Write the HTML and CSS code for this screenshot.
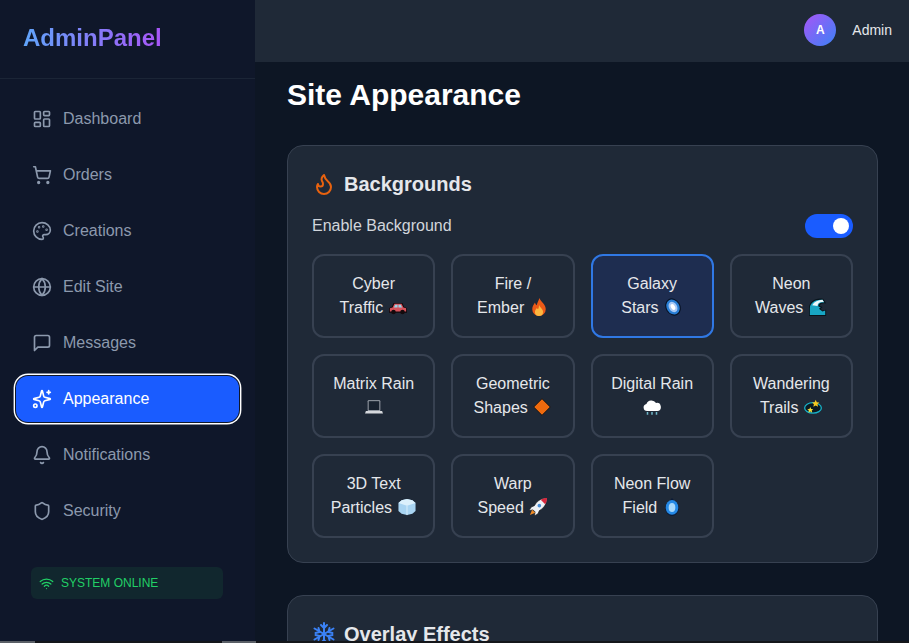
FILE: index.html
```html
<!DOCTYPE html>
<html lang="en">
<head>
<meta charset="utf-8">
<title>Site Appearance</title>
<link rel="stylesheet" href="styles.css">
</head>
<body>
<aside class="sidebar">
  <div class="brand"><span class="brand-text">AdminPanel</span></div>
  <nav class="nav">
    <a class="nav-item"><svg class="ico" viewBox="0 0 24 24"><rect x="3" y="3" width="7" height="9" rx="1"/><rect x="14" y="3" width="7" height="5" rx="1"/><rect x="14" y="12" width="7" height="9" rx="1"/><rect x="3" y="16" width="7" height="5" rx="1"/></svg>Dashboard</a>
    <a class="nav-item"><svg class="ico" viewBox="0 0 24 24"><circle cx="8" cy="21" r="1"/><circle cx="19" cy="21" r="1"/><path d="M2.05 2.05h2l2.66 12.42a2 2 0 0 0 2 1.58h9.78a2 2 0 0 0 1.95-1.57l1.65-7.43H5.12"/></svg>Orders</a>
    <a class="nav-item"><svg class="ico" viewBox="0 0 24 24"><circle cx="13.5" cy="6.5" r=".5"/><circle cx="17.5" cy="10.5" r=".5"/><circle cx="8.5" cy="7.5" r=".5"/><circle cx="6.5" cy="12.5" r=".5"/><path d="M12 2C6.5 2 2 6.5 2 12s4.5 10 10 10c.926 0 1.648-.746 1.648-1.688 0-.437-.18-.835-.437-1.125-.29-.289-.438-.652-.438-1.125a1.64 1.64 0 0 1 1.668-1.668h1.996c3.051 0 5.555-2.503 5.555-5.554C21.965 6.012 17.461 2 12 2z"/></svg>Creations</a>
    <a class="nav-item"><svg class="ico" viewBox="0 0 24 24"><circle cx="12" cy="12" r="10"/><path d="M12 2a14.5 14.5 0 0 0 0 20 14.5 14.5 0 0 0 0-20"/><path d="M2 12h20"/></svg>Edit Site</a>
    <a class="nav-item"><svg class="ico" viewBox="0 0 24 24"><path d="M21 15a2 2 0 0 1-2 2H7l-4 4V5a2 2 0 0 1 2-2h14a2 2 0 0 1 2 2z"/></svg>Messages</a>
    <a class="nav-item active"><svg class="ico" viewBox="0 0 24 24"><path d="M9.937 15.5A2 2 0 0 0 8.5 14.063l-6.135-1.582a.5.5 0 0 1 0-.962L8.5 9.936A2 2 0 0 0 9.937 8.5l1.582-6.135a.5.5 0 0 1 .963 0L14.063 8.5A2 2 0 0 0 15.5 9.937l6.135 1.581a.5.5 0 0 1 0 .964L15.5 14.063a2 2 0 0 0-1.437 1.437l-1.582 6.135a.5.5 0 0 1-.963 0z"/><path d="M20 2v4"/><path d="M22 4h-4"/><circle cx="4" cy="20" r="2"/></svg>Appearance</a>
    <a class="nav-item"><svg class="ico" viewBox="0 0 24 24"><path d="M10.268 21a2 2 0 0 0 3.464 0"/><path d="M3.262 15.326A1 1 0 0 0 4 17h16a1 1 0 0 0 .74-1.673C19.41 13.956 18 12.499 18 8A6 6 0 0 0 6 8c0 4.499-1.411 5.956-2.738 7.326"/></svg>Notifications</a>
    <a class="nav-item"><svg class="ico" viewBox="0 0 24 24"><path d="M20 13c0 5-3.500 7.500-7.660 8.950a1 1 0 0 1-.670-.010C7.500 20.500 4 18 4 13V6a1 1 0 0 1 1-1c2 0 4.500-1.200 6.240-2.720a1.170 1.170 0 0 1 1.520 0C14.510 3.810 17 5 19 5a1 1 0 0 1 1 1z"/></svg>Security</a>
  </nav>
  <div class="status"><svg class="ico-sm" viewBox="0 0 24 24"><path d="M12 20h.01"/><path d="M2 8.820a15 15 0 0 1 20 0"/><path d="M5 12.859a10 10 0 0 1 14 0"/><path d="M8.500 16.429a5 5 0 0 1 7 0"/></svg>SYSTEM ONLINE</div>
</aside>
<div class="column">
  <header class="topbar">
    <div class="avatar">A</div>
    <span class="user">Admin</span>
  </header>
  <main class="content">
    <h1 class="page-title">Site Appearance</h1>
    <section class="card">
      <h2 class="card-title"><svg class="ico-lg flame" viewBox="0 0 24 24"><path d="M8.500 14.500A2.500 2.500 0 0 0 11 12c0-1.380-.5-2-1-3-1.072-2.143-.224-4.054 2-6 .5 2.500 2 4.900 4 6.500 2 1.600 3 3.500 3 5.500a7 7 0 1 1-14 0c0-1.153.433-2.294 1-3a2.500 2.500 0 0 0 2.500 2.500z"/></svg>Backgrounds</h2>
      <div class="toggle-row">
        <span>Enable Background</span>
        <span class="toggle"><span class="knob"></span></span>
      </div>
      <div class="grid">
        <button class="tile">Cyber Traffic <svg class="emoji" viewBox="0 0 20 20"><path d="M0 16.500v-5l3-1.500 2-4.500h10l2 4.500 3 1.500v5z" fill="#15090c"/><path d="M1 15v-3.500L4 10.500 6 6.500h8l2 4 3 1V15z" fill="#d8535c"/><path d="M6.800 7.500h2.700v3H5.500zM10.500 7.500h2.700l1.300 3h-4z" fill="#9ad4e8"/><circle cx="5" cy="15.500" r="2.500" fill="#15090c"/><circle cx="15" cy="15.500" r="2.500" fill="#15090c"/></svg></button>
        <button class="tile">Fire / Ember <svg class="emoji" viewBox="0 0 20 20"><path d="M10.500 0c1 4 7 6.500 7 12.500a7.500 7.500 0 0 1-15 0c0-3.500 1.800-5 3-7.500.5 1.500 1 2.500 2 3C8 5.500 9.500 3 10.500 0z" fill="#ec5a17"/><path d="M10 7.500c.5 2.500 4.500 4.500 4.500 8a4.500 4.500 0 0 1-9 0c0-2.500 1.300-3 2-4.500.5.7 1 1.300 1.500 1.300C9.800 11 10 9.500 10 7.500z" fill="#fcb73f"/></svg></button>
        <button class="tile selected">Galaxy Stars <svg class="emoji" viewBox="0 0 20 20"><ellipse cx="10" cy="10" rx="8.200" ry="10" transform="rotate(-30 10 10)" fill="#081225"/><ellipse cx="10" cy="10" rx="7" ry="8.800" transform="rotate(-30 10 10)" fill="#2a7fd6"/><ellipse cx="10" cy="10" rx="4.500" ry="6.200" transform="rotate(-30 10 10)" fill="#a9c9f5"/><ellipse cx="10" cy="10" rx="2.200" ry="3.500" transform="rotate(-30 10 10)" fill="#fff"/></svg></button>
        <button class="tile">Neon Waves <svg class="emoji" viewBox="0 0 20 20"><path d="M0 20V11C0 4 8-1 16 1l3 5c-5-1-7 1-7 3l3 1-2 2 2 2 4-1v7z" fill="#08141c"/><path d="M1 19v-8C1 5 8 1 15 2l2 3c-5-.5-7 1.500-6.500 4.500L13 10.500 11 12l4 3 3-1v5z" fill="#18a6c4"/><path d="M3.500 8C6 4 10 2.500 15 2l1.500 2.500C12 4 9.500 5.500 9.500 9z" fill="#edf9fc"/></svg></button>
        <button class="tile">Matrix Rain <svg class="emoji" viewBox="0 0 20 20"><rect x="3" y="2.500" width="14" height="12" rx="1" fill="#aab0b8"/><rect x="4" y="3.500" width="12" height="10" fill="#18222f"/><path d="M1 14.500h18l1 2.800H0z" fill="#d5d8dc"/></svg></button>
        <button class="tile">Geometric Shapes <svg class="emoji" viewBox="0 0 20 20"><path d="M10 .8 19.200 10 10 19.200 .8 10z" fill="#ef6a0e" stroke="#141414" stroke-width="1"/></svg></button>
        <button class="tile">Digital Rain <svg class="emoji" viewBox="0 0 20 20"><path d="M4.500 14.500A4 4 0 0 1 3.800 6.600 6 6 0 0 1 14.500 5.500 4.500 4.500 0 0 1 16 14.500z" fill="#fff"/><path d="M5 15.500v3M10 15.500v3M15 15.500v3" stroke="#6fb7c9" stroke-width="1.700"/></svg></button>
        <button class="tile">Wandering Trails <svg class="emoji" viewBox="0 0 20 20"><ellipse cx="10" cy="11" rx="9.300" ry="5.800" fill="#0b1a22" stroke="#17b3c9" stroke-width="1.400"/><path d="m13 2 1.200 2.800 2.800.3-2 1.900.6 2.800-2.600-1.400-2.600 1.400.6-2.800-2-1.900 2.800-.3z" fill="#f7c81e"/><path d="m7 10 1 2.200 2.300.2-1.700 1.600.5 2.300-2.100-1.200-2.100 1.200.5-2.300-1.700-1.600 2.300-.2z" fill="#f7e03a"/></svg></button>
        <button class="tile">3D Text Particles <svg class="emoji" viewBox="0 0 20 20"><path d="M4 2.500 10 1l6 1.500 3.500 3v9l-3.500 3L10 19l-6-1.500-3.500-3v-9z" fill="#a8d4f2"/><path d="M4 2.500 10 1l6 1.500 3.500 3L10 8.500.5 5.500z" fill="#dbf0fc"/><path d="M10 8.500V19" stroke="#dbf0fc" stroke-width="1"/></svg></button>
        <button class="tile">Warp Speed <svg class="emoji" viewBox="0 0 20 20"><path d="M20 0C14 0 9 3 6 8.500L2.500 10 0 14l4.500-.8L6.800 15.500 6 20l4-2.500 1.500-3.500C17 11 20 6 20 0z" fill="#eef1f5" stroke="#141414" stroke-width=".7"/><path d="M20 0c-2.500 0-4.500.6-7 2l5 5c1.400-2.500 2-4.500 2-7z" fill="#d6263c"/><circle cx="11.500" cy="8.500" r="2" fill="#4a8fd8"/><path d="m1 19 2.500-6 3.500 3.500z" fill="#f08a24"/></svg></button>
        <button class="tile">Neon Flow Field <svg class="emoji" viewBox="0 0 20 20"><path d="M10 0 17.500 8.500C18.500 14 15 20 10 20S1.500 14 2.500 8.500z" fill="#0a1b38"/><ellipse cx="10" cy="10.500" rx="7" ry="8.200" fill="#2589e6"/><ellipse cx="10" cy="10.500" rx="3.700" ry="5" fill="#a8d8fb"/></svg></button>
      </div>
    </section>
    <section class="card">
      <h2 class="card-title"><svg class="ico-lg snow" viewBox="0 0 24 24"><path d="M12 1v22"/><path d="M2.500 6.500l19 11"/><path d="M21.500 6.500l-19 11"/><path d="m9 3 3 3 3-3"/><path d="m9 21 3-3 3 3"/><path d="M3.500 11l4-1-1-4"/><path d="M20.500 11l-4-1 1-4"/><path d="M3.500 13l4 1-1 4"/><path d="M20.500 13l-4 1 1 4"/></svg>Overlay Effects</h2>
    </section>
  </main>
</div>
<div class="scroll-strip"><span class="strip-a"></span><span class="strip-b"></span></div>
</body>
</html>
```

FILE: styles.css
```css
* { box-sizing: border-box; }
html, body { height: 100%; margin: 0; }
body {
  display: flex;
  position: relative;
  overflow: hidden;
  background: #0d1624;
  font-family: "Liberation Sans", Arial, sans-serif;
  color: #e5e7eb;
}
.sidebar {
  width: 255px;
  flex: none;
  background: #0f172a;
  display: flex;
  flex-direction: column;
}
.brand {
  height: 79px;
  padding: 23px 23px 0;
  border-bottom: 1px solid #1b2536;
}
.brand-text {
  font-size: 24px;
  line-height: 29px;
  font-weight: 700;
  background: linear-gradient(90deg, #60a5fa, #a855f7);
  -webkit-background-clip: text;
  background-clip: text;
  color: transparent;
}
.nav {
  display: flex;
  flex-direction: column;
  gap: 10px;
  padding: 17px 16px 0;
}
.nav-item {
  height: 46px;
  width: 223px;
  display: flex;
  align-items: center;
  gap: 11px;
  padding-left: 16px;
  border-radius: 12px;
  font-size: 16px;
  color: #8c99ad;
}
.nav-item.active {
  background: #1a5cff;
  color: #fff;
  box-shadow: 0 0 0 1px #0f172a, 0 0 0 2.4px #fff;
}
.ico, .ico-sm, .ico-lg {
  flex: none;
  fill: none;
  stroke: currentColor;
  stroke-width: 2;
  stroke-linecap: round;
  stroke-linejoin: round;
}
.ico { width: 20px; height: 20px; }
.ico-sm { width: 15px; height: 15px; }
.ico-lg { width: 24px; height: 24px; }
.status {
  margin: 33px 0 0 31px;
  width: 192px;
  height: 32px;
  display: flex;
  align-items: center;
  gap: 7px;
  padding-left: 8px;
  border-radius: 6px;
  background: #11272e;
  color: #21cf66;
  font-size: 12px;
}
.column {
  flex: 1;
  min-width: 0;
  display: flex;
  flex-direction: column;
}
.topbar {
  height: 62px;
  flex: none;
  background: #1f2937;
  display: flex;
  align-items: center;
  justify-content: flex-end;
  gap: 16px;
  padding: 0 17px 2px 0;
}
.avatar {
  width: 32px;
  height: 32px;
  border-radius: 50%;
  background: linear-gradient(135deg, #a855f7, #3b82f6);
  color: #fff;
  display: flex;
  align-items: center;
  justify-content: center;
  font-size: 12px;
  font-weight: 700;
}
.user { font-size: 14px; color: #e5e7eb; }
.content {
  flex: 1;
  min-height: 0;
  overflow: hidden;
  padding: 15px 31px 0 32px;
}
.page-title {
  margin: 0 0 32px;
  font-size: 30px;
  line-height: 36px;
  font-weight: 700;
  color: #fff;
}
.card {
  background: #1f2937;
  border: 1px solid #374151;
  border-radius: 16px;
  padding: 24px;
  margin-bottom: 32px;
}
.card-title {
  margin: 0 0 16px;
  display: flex;
  align-items: center;
  gap: 8px;
  font-size: 20px;
  line-height: 28px;
  font-weight: 700;
  color: #e5e7eb;
}
.flame { color: #e8620f; }
.snow { color: #3b82f6; }
.toggle-row {
  display: flex;
  justify-content: space-between;
  align-items: center;
  font-size: 16px;
  color: #d1d5db;
  height: 24px;
  margin-bottom: 16px;
}
.toggle {
  width: 48px;
  height: 24px;
  border-radius: 12px;
  background: #1a5cff;
  display: flex;
  align-items: center;
  justify-content: flex-end;
  padding-right: 4px;
}
.knob {
  width: 16px;
  height: 16px;
  border-radius: 50%;
  background: #fff;
}
.grid {
  display: grid;
  grid-template-columns: repeat(4, 1fr);
  gap: 16px;
}
.tile {
  height: 84px;
  padding: 16px;
  border: 2px solid #374151;
  border-radius: 12px;
  background: transparent;
  color: #e5e7eb;
  font: 400 16px/24px "Liberation Sans", Arial, sans-serif;
  text-align: center;
}
.tile.selected {
  border-color: #3078e4;
  background: #1e2d50;
}
.emoji {
  width: 18px;
  height: 18px;
  margin: 0 1px;
  vertical-align: -3px;
}
.scroll-strip {
  position: absolute;
  left: 0;
  right: 0;
  bottom: 0;
  height: 2px;
  background: #14161a;
}
.strip-a, .strip-b {
  position: absolute;
  top: 0;
  height: 2px;
  background: #5a5f66;
}
.strip-a { left: 0; width: 35px; }
.strip-b { left: 222px; width: 34px; }
```
